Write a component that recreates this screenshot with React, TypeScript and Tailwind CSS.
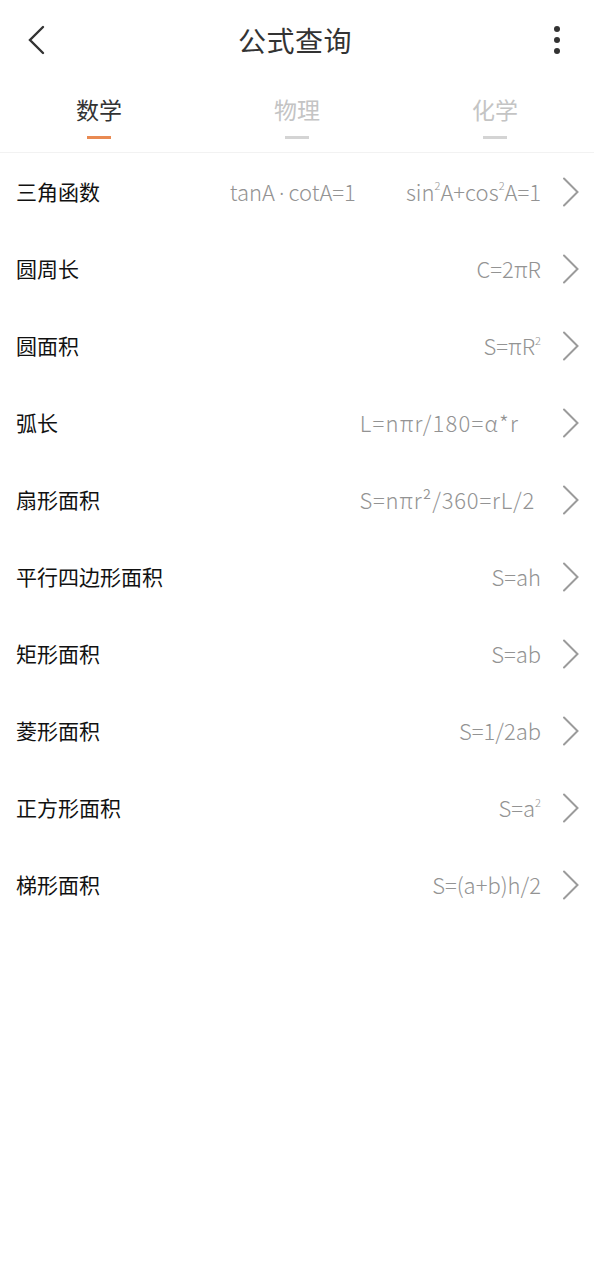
const sup = "text-[11px] align-[0.45em] leading-none";

const rows: { name: string; formulas: React.ReactNode[]; wide?: string }[] = [
  {
    name: "三角函数",
    formulas: [
      <>
        tanA<span style={{ fontFamily: '"Noto Sans", sans-serif' }} className="px-[4px]">·</span>cotA=1
      </>,
      <>
        sin<sup className={sup}>2</sup>A+cos<sup className={sup}>2</sup>A=1
      </>,
    ],
  },
  { name: "圆周长", formulas: ["C=2πR"] },
  {
    name: "圆面积",
    formulas: [
      <>
        S=πR<sup className={sup}>2</sup>
      </>,
    ],
  },
  { name: "弧长", formulas: ["L=nπr/180=α*r"], wide: "pr-[43px] tracking-[1.2px]" },
  { name: "扇形面积", formulas: ["S=nπr²/360=rL/2"], wide: "pr-[27px] tracking-[0.8px]" },
  { name: "平行四边形面积", formulas: ["S=ah"] },
  { name: "矩形面积", formulas: ["S=ab"] },
  { name: "菱形面积", formulas: ["S=1/2ab"] },
  {
    name: "正方形面积",
    formulas: [
      <>
        S=a<sup className={sup}>2</sup>
      </>,
    ],
  },
  { name: "梯形面积", formulas: ["S=(a+b)h/2"] },
];

const tabs = ["数学", "物理", "化学"];

function Chevron() {
  return (
    <svg width="18" height="30" viewBox="0 0 18 30" fill="none" className="shrink-0">
      <path d="M2 1.5 L15.5 15 L2 28.5" stroke="#9b9b9b" strokeWidth="2" strokeLinecap="round" />
    </svg>
  );
}

export default function App() {
  return (
    <div
      className="w-[594px] min-h-[1280px] bg-white text-[#222]"
      style={{ fontFamily: '"Noto Sans CJK SC", "Noto Sans", sans-serif' }}
    >
      <header className="h-[80px] flex items-center justify-between pl-[26px] pr-[34px]">
        <svg width="22" height="30" viewBox="0 0 22 30" fill="none">
          <path d="M17 2 L4 15 L17 28" stroke="#333" strokeWidth="2.4" strokeLinecap="round" />
        </svg>
        <h1 className="text-[28px] text-[#333] tracking-[0.5px] pr-[4px]">公式查询</h1>
        <div className="w-[14px] flex flex-col items-end gap-[5px]">
          <span className="w-[6px] h-[6px] rounded-full bg-[#333]" />
          <span className="w-[6px] h-[6px] rounded-full bg-[#333]" />
          <span className="w-[6px] h-[6px] rounded-full bg-[#333]" />
        </div>
      </header>

      <nav className="grid grid-cols-3 h-[73px] border-b border-[#f2f2f2]">
        {tabs.map((t, i) => (
          <div key={t} className="flex flex-col items-center pt-[12px]">
            <span className={`text-[23px] leading-[34px] ${i === 0 ? "text-[#333]" : "text-[#c4c4c4]"}`}>{t}</span>
            <span className={`mt-[10px] w-[24px] h-[3px] ${i === 0 ? "bg-[#e98a52]" : "bg-[#d4d4d4]"}`} />
          </div>
        ))}
      </nav>

      <ul>
        {rows.map((r) => (
          <li key={r.name} className="h-[77px] flex items-center pl-[16px] pr-[14px]">
            <span className="text-[21px] text-[#111] shrink-0">{r.name}</span>
            <div
              className={`flex-1 flex justify-end gap-[50px] text-[22px] text-[#939393] font-light ${r.wide ?? "pr-[21px]"}`}
            >
              {r.formulas.map((f, i) => (
                <span key={i}>{f}</span>
              ))}
            </div>
            <Chevron />
          </li>
        ))}
      </ul>
    </div>
  );
}
